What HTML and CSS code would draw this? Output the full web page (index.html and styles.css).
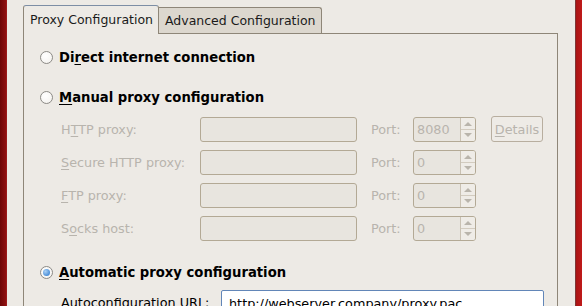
FILE: index.html
```html
<!DOCTYPE html>
<html lang="en">
<head>
  <meta charset="UTF-8">
  <title>Network Proxy Preferences</title>
  <link rel="stylesheet" href="styles.css">
</head>
<body>
  <div class="edge edge-left"></div>

  <div class="window">
    <div class="tabs">
      <div class="tab active">Proxy Configuration</div>
      <div class="tab">Advanced Configuration</div>
    </div>

    <div class="pane">
      <label class="radio-row">
        <span class="radio"></span>
        <span class="radio-label">Di<u>r</u>ect internet connection</span>
      </label>

      <label class="radio-row">
        <span class="radio"></span>
        <span class="radio-label"><u>M</u>anual proxy configuration</span>
      </label>

      <div class="proxy-grid">
        <span class="field-label">H<u>T</u>TP proxy:</span>
        <span class="entry disabled"></span>
        <span class="field-label">Port:</span>
        <span class="spin"><span class="spin-value">8080</span><span class="spin-arrows"><i class="up"></i><i class="down"></i></span></span>
        <span class="button disabled"><u>D</u>etails</span>

        <span class="field-label"><u>S</u>ecure HTTP proxy:</span>
        <span class="entry disabled"></span>
        <span class="field-label">Port:</span>
        <span class="spin"><span class="spin-value">0</span><span class="spin-arrows"><i class="up"></i><i class="down"></i></span></span>
        <span></span>

        <span class="field-label"><u>F</u>TP proxy:</span>
        <span class="entry disabled"></span>
        <span class="field-label">Port:</span>
        <span class="spin"><span class="spin-value">0</span><span class="spin-arrows"><i class="up"></i><i class="down"></i></span></span>
        <span></span>

        <span class="field-label">S<u>o</u>cks host:</span>
        <span class="entry disabled"></span>
        <span class="field-label">Port:</span>
        <span class="spin"><span class="spin-value">0</span><span class="spin-arrows"><i class="up"></i><i class="down"></i></span></span>
        <span></span>
      </div>

      <label class="radio-row auto">
        <span class="radio checked"></span>
        <span class="radio-label"><u>A</u>utomatic proxy configuration</span>
      </label>

      <div class="url-row">
        <span class="url-label">Autoconfiguration <u>U</u>RL:</span>
        <span class="entry focused">http://webserver.company/proxy.pac</span>
      </div>
    </div>
  </div>

  <div class="edge edge-right"></div>
</body>
</html>
```

FILE: styles.css
```css
html, body {
  margin: 0;
  padding: 0;
  height: 100%;
  overflow: hidden;
}

body {
  display: flex;
  background-color: #edeae5;
  font-family: 'DejaVu Sans', 'Liberation Sans', sans-serif;
  font-size: 12.8px;
  color: #000;
}

u {
  text-decoration-thickness: 1px;
  text-underline-offset: 2px;
}

.edge {
  width: 7px;
  flex: none;
}

.edge-left {
  background: linear-gradient(to right, #6e0606, #8c1010 80%, #a52020);
}

.edge-right {
  background: linear-gradient(to right, #555, #a81414 15%, #c01a1a);
}

.window {
  flex: 1;
  padding: 6px 17px 0 16px;
}

/* tabs */
.tabs {
  display: flex;
  align-items: flex-end;
  height: 27px;
  position: relative;
  z-index: 1;
  font-size: 12.5px;
}

.tab {
  height: 25px;
  line-height: 26px;
  padding: 0 5px 0 6px;
  background-color: #dcd7ce;
  border: 1px solid #8e8678;
  border-bottom: none;
  border-radius: 0 3px 0 0;
  color: #1a1a1a;
}

.tab.active {
  height: 28px;
  line-height: 28px;
  background-color: #edeae5;
  border-top-color: #7d8ea5;
  border-radius: 3px 3px 0 0;
  margin-bottom: -1px;
}

.tab + .tab {
  border-left: none;
}

.pane {
  border: 1px solid #8e8678;
  height: 400px;
  padding: 13px 0 0 16px;
}

/* radio rows */
.radio-row {
  display: flex;
  align-items: center;
  height: 20px;
  font-weight: bold;
  font-size: 13.2px;
}

.radio-row + .radio-row {
  margin-top: 20px;
}

.radio {
  width: 11px;
  height: 11px;
  border: 1px solid #8c8a86;
  border-radius: 50%;
  background: radial-gradient(circle at 40% 35%, #fff, #f2f0ec);
  margin-right: 6px;
  position: relative;
}

.radio.checked::after {
  content: "";
  position: absolute;
  left: 2px;
  top: 2px;
  width: 7px;
  height: 7px;
  border-radius: 50%;
  background: radial-gradient(circle at 35% 35%, #a9d0f5, #4a8fd8 70%);
}

/* proxy grid */
.proxy-grid {
  display: grid;
  grid-template-columns: 139px 171px 42px 78px 52px;
  grid-auto-rows: 25px;
  row-gap: 8px;
  align-items: center;
  margin: 10px 0 0 21px;
  color: #b8b4ad;
}

.entry {
  display: block;
  height: 23px;
  border: 1px solid #b3a995;
  border-radius: 3px;
  box-sizing: border-box;
}

.entry.disabled {
  width: 157px;
  height: 25px;
  background-color: #e8e5df;
}

.spin {
  display: flex;
  width: 63px;
  height: 25px;
  box-sizing: border-box;
  border: 1px solid #b3a995;
  border-radius: 3px;
  background-color: #e8e5df;
}

.spin-value {
  flex: 1;
  line-height: 23px;
  padding-left: 3px;
  border-right: 1px solid #c9c1b3;
}

.spin-arrows {
  width: 14px;
  display: flex;
  flex-direction: column;
  background-color: #efece7;
  border-radius: 0 2px 2px 0;
}

.spin-arrows i {
  flex: 1;
  position: relative;
}

.spin-arrows i.up {
  border-bottom: 1px solid #d2cbbf;
}

.spin-arrows i::after {
  content: "";
  position: absolute;
  left: 3px;
  top: 4px;
  border-left: 4px solid transparent;
  border-right: 4px solid transparent;
}

.spin-arrows i.up::after {
  border-bottom: 4px solid #b9b4ab;
}

.spin-arrows i.down::after {
  top: 3px;
  border-top: 4px solid #b9b4ab;
}

.button {
  display: flex;
  align-items: center;
  justify-content: center;
  width: 52px;
  height: 26px;
  margin-top: -1px;
  box-sizing: border-box;
  border: 1px solid #b8ae9f;
  border-radius: 3px;
  background-color: #eeebe6;
}

/* autoconfig url */
.radio-row.auto {
  margin-top: 21px;
}

.url-row {
  display: flex;
  align-items: center;
  margin: 8px 0 0 21px;
}

.url-label {
  width: 160px;
}

.entry.focused {
  width: 323px;
  height: 25px;
  line-height: 25px;
  padding-left: 7px;
  background-color: #fff;
  border-color: #6286b8;
  border-radius: 2px;
}
```
